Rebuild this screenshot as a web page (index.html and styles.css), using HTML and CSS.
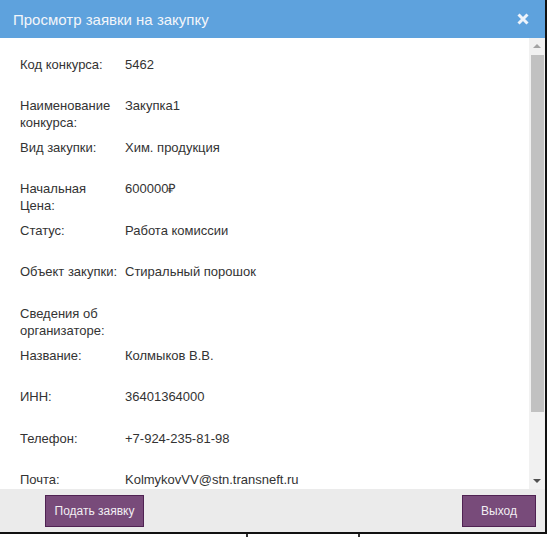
FILE: index.html
```html
<!DOCTYPE html>
<html lang="ru">
<head>
<meta charset="utf-8">
<title>Просмотр заявки на закупку</title>
<link rel="stylesheet" href="styles.css">
</head>
<body>
<div class="dialog">
  <div class="header">
    <span class="title">Просмотр заявки на закупку</span>
    <svg class="close" width="12" height="12" viewBox="0 0 12 12"><path d="M1.5 1.5 L10.5 10.5 M10.5 1.5 L1.5 10.5" stroke="#eef4fb" stroke-width="3" stroke-linecap="butt"/></svg>
  </div>
  <div class="body">
    <div class="rows">
      <div class="row"><div class="label">Код конкурса:</div><div class="value">5462</div></div>
      <div class="row"><div class="label">Наименование конкурса:</div><div class="value">Закупка1</div></div>
      <div class="row"><div class="label">Вид закупки:</div><div class="value">Хим. продукция</div></div>
      <div class="row"><div class="label">Начальная Цена:</div><div class="value">600000₽</div></div>
      <div class="row"><div class="label">Статус:</div><div class="value">Работа комиссии</div></div>
      <div class="row"><div class="label">Объект закупки:</div><div class="value">Стиральный порошок</div></div>
      <div class="row"><div class="label">Сведения об организаторе:</div><div class="value"></div></div>
      <div class="row"><div class="label">Название:</div><div class="value">Колмыков В.В.</div></div>
      <div class="row"><div class="label">ИНН:</div><div class="value">36401364000</div></div>
      <div class="row"><div class="label">Телефон:</div><div class="value">+7-924-235-81-98</div></div>
      <div class="row"><div class="label">Почта:</div><div class="value">KolmykovVV@stn.transneft.ru</div></div>
    </div>
    <div class="scrollbar">
      <div class="sb-btn"><span class="arrow-up"></span></div>
      <div class="sb-track"><div class="sb-thumb"></div></div>
      <div class="sb-btn"><span class="arrow-down"></span></div>
    </div>
  </div>
  <div class="footer">
    <button class="btn btn-submit">Подать заявку</button>
    <button class="btn btn-exit">Выход</button>
  </div>
</div>
<div class="under">
  <div class="under-a"></div>
  <div class="under-b"></div>
</div>
</body>
</html>
```
FILE: styles.css
```css
html, body {
  margin: 0;
  padding: 0;
  background: #ffffff;
  font-family: "Liberation Sans", Arial, sans-serif;
}

.dialog {
  width: 545px;
  border-right: 2px solid #111111;
  border-bottom: 2px solid #111111;
  display: flex;
  flex-direction: column;
}

.header {
  height: 38px;
  background: #5ea2dd;
  display: flex;
  align-items: center;
  justify-content: space-between;
  padding: 0 16px 0 13px;
}

.title {
  color: #f3f6fa;
  font-size: 15px;
}

.close {
  display: block;
}

.body {
  height: 451px;
  display: flex;
  background: #ffffff;
  overflow: hidden;
}

.rows {
  flex: 1;
  display: flex;
  flex-direction: column;
  gap: 7.6px;
  padding: 17.5px 0 0 20px;
}

.row {
  display: grid;
  grid-template-columns: 100px 1fr;
  column-gap: 5px;
  min-height: 34px;
  font-size: 13px;
  line-height: 17px;
  color: #333333;
}

.scrollbar {
  width: 16px;
  background: #f1f1f1;
  display: flex;
  flex-direction: column;
}

.sb-btn {
  height: 16px;
  display: flex;
  align-items: center;
  justify-content: center;
}

.arrow-up {
  width: 0;
  height: 0;
  border-left: 4px solid transparent;
  border-right: 4px solid transparent;
  border-bottom: 4px solid #a3a3a3;
}

.arrow-down {
  width: 0;
  height: 0;
  border-left: 4px solid transparent;
  border-right: 4px solid transparent;
  border-top: 4px solid #505050;
}

.sb-track {
  flex: 1;
  padding: 1px 1px 0 2px;
}

.sb-thumb {
  height: 357px;
  background: #c1c1c1;
}

.footer {
  height: 43px;
  background: #ebebeb;
  display: flex;
  align-items: flex-start;
  justify-content: space-between;
  padding: 6px 9px 0 45px;
  box-sizing: border-box;
}

.btn {
  height: 32px;
  background: #784b7a;
  border: 1px solid #4f2252;
  color: #f2eef3;
  font-family: "Liberation Sans", Arial, sans-serif;
  font-size: 12px;
  padding: 0;
  white-space: nowrap;
  cursor: pointer;
}

.btn-submit {
  width: 99px;
}

.btn-exit {
  width: 74px;
}

.under {
  height: 3px;
  display: flex;
}

.under-a {
  width: 246px;
  border-right: 2px solid #333333;
}

.under-b {
  width: 110px;
  border-right: 2px solid #333333;
}
```
